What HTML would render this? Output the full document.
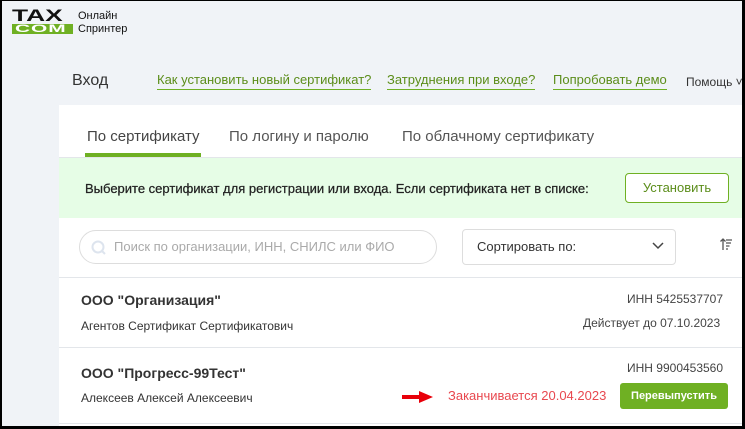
<!DOCTYPE html><html><head><meta charset="utf-8"><style>
*{margin:0;padding:0;box-sizing:border-box}
body{width:745px;height:429px;background:#000;font-family:"Liberation Sans","DejaVu Sans",sans-serif;position:relative;overflow:hidden}
.bg{position:absolute;left:2px;top:1px;width:740px;height:425px;background:#f0f3f7;overflow:hidden}
.a{position:absolute;white-space:nowrap}
.lnk{color:#5b8d1a;font-size:13px;border-bottom:1px solid #6fb023;padding-bottom:2px}
.card{position:absolute;left:57px;top:104px;width:700px;height:330px;background:#fff}
</style></head><body><div class="bg">
<div class="a" style="left:10px;top:8px;font:900 17px/14px 'Liberation Sans';color:#111;transform:scaleX(1.55);transform-origin:0 0">TAX</div>
<div class="a" style="left:10px;top:23px;width:61px;height:10px;background:#6fb023"></div>
<div class="a" style="left:13px;top:23px;font:900 11px/10px 'Liberation Sans';color:#fff;transform:scaleX(1.9);transform-origin:0 0;letter-spacing:0.5px">COM</div>
<div class="a" style="left:76px;top:9px;font-size:11px;line-height:13px;color:#111">Онлайн<br>Спринтер</div>
<div class="a" style="left:70px;top:71px;font-size:16px;color:#333">Вход</div>
<div class="a lnk" style="left:155px;top:71px">Как установить новый сертификат?</div>
<div class="a lnk" style="left:385px;top:71px">Затруднения при входе?</div>
<div class="a lnk" style="left:551px;top:71px">Попробовать демо</div>
<div class="a" style="left:684px;top:74px;font-size:12px;color:#333">Помощь ˅</div>
<div class="card">
<div class="a" style="left:28px;top:23px;font-size:15px;color:#444">По сертификату</div>
<div class="a" style="left:26px;top:48px;width:116px;height:4px;background:#6fb023"></div>
<div class="a" style="left:170px;top:23px;font-size:15px;color:#555">По логину и паролю</div>
<div class="a" style="left:343px;top:23px;font-size:15px;color:#555">По облачному сертификату</div>
<div class="a" style="left:0;top:52px;width:700px;height:1px;background:#e3e6ea"></div>
<div class="a" style="left:0;top:53px;width:700px;height:60px;background:#e6fde6"></div>
<div class="a" style="left:26px;top:76px;font-size:13px;color:#222;-webkit-text-stroke:0.25px #222">Выберите сертификат для регистрации или входа. Если сертификата нет в списке:</div>
<div class="a" style="left:566px;top:68px;width:104px;height:30px;border:1px solid #6fb023;border-radius:4px;background:#fff;color:#5b8d1a;font-size:13px;text-align:center;line-height:28px">Установить</div>
<div class="a" style="left:20px;top:125px;width:358px;height:34px;border:1px solid #ddd;border-radius:17px"></div>
<svg class="a" style="left:32px;top:135px" width="16" height="16"><circle cx="7" cy="7" r="5.5" fill="none" stroke="#dde4ee" stroke-width="2"/><line x1="11" y1="11" x2="14" y2="14" stroke="#dde4ee" stroke-width="2"/></svg>
<div class="a" style="left:55px;top:134px;font-size:13px;color:#aaa">Поиск по организации, ИНН, СНИЛС или ФИО</div>
<div class="a" style="left:403px;top:124px;width:214px;height:36px;border:1px solid #ddd;border-radius:4px"></div>
<div class="a" style="left:418px;top:134px;font-size:13px;color:#333">Сортировать по:</div>
<svg class="a" style="left:593px;top:137px" width="12" height="8"><path d="M1 1l5 5 5-5" fill="none" stroke="#444" stroke-width="1.5"/></svg>
<svg class="a" style="left:661px;top:133px" width="12" height="13"><path d="M3 12V1M0.5 3.5L3 1l2.5 2.5M6 2h6M6 5h5M6 8h3.5M6 11h2" fill="none" stroke="#555" stroke-width="1.3"/></svg>
<div class="a" style="left:0;top:172px;width:700px;height:1px;background:#e3e6ea"></div>
<div class="a" style="left:22px;top:187px;font-size:14px;font-weight:bold;color:#333">ООО "Организация"</div>
<div class="a" style="left:22px;top:214px;font-size:12px;color:#333">Агентов Сертификат Сертификатович</div>
<div class="a" style="left:568px;top:187px;font-size:12px;color:#444">ИНН 5425537707</div>
<div class="a" style="left:524px;top:211px;font-size:12px;color:#444">Действует до 07.10.2023</div>
<div class="a" style="left:0;top:242px;width:700px;height:1px;background:#e3e6ea"></div>
<div class="a" style="left:22px;top:260px;font-size:14px;font-weight:bold;color:#333">ООО "Прогресс-99Тест"</div>
<div class="a" style="left:22px;top:286px;font-size:12px;color:#333">Алексеев Алексей Алексеевич</div>
<div class="a" style="left:568px;top:256px;font-size:12px;color:#444">ИНН 9900453560</div>
<svg class="a" style="left:341px;top:285px" width="34" height="14"><path d="M2 5h17V1l14 6-14 6V9H2z" fill="#e8000a"/></svg>
<div class="a" style="left:389px;top:283px;font-size:13px;color:#e8484f">Заканчивается 20.04.2023</div>
<div class="a" style="left:561px;top:278px;width:108px;height:26px;background:#6fb023;border-radius:3px;color:#fff;font-size:11px;font-weight:bold;text-align:center;line-height:26px">Перевыпустить</div>
<div class="a" style="left:0;top:318px;width:700px;height:1px;background:#e3e6ea"></div>
</div>
</div></body></html>
